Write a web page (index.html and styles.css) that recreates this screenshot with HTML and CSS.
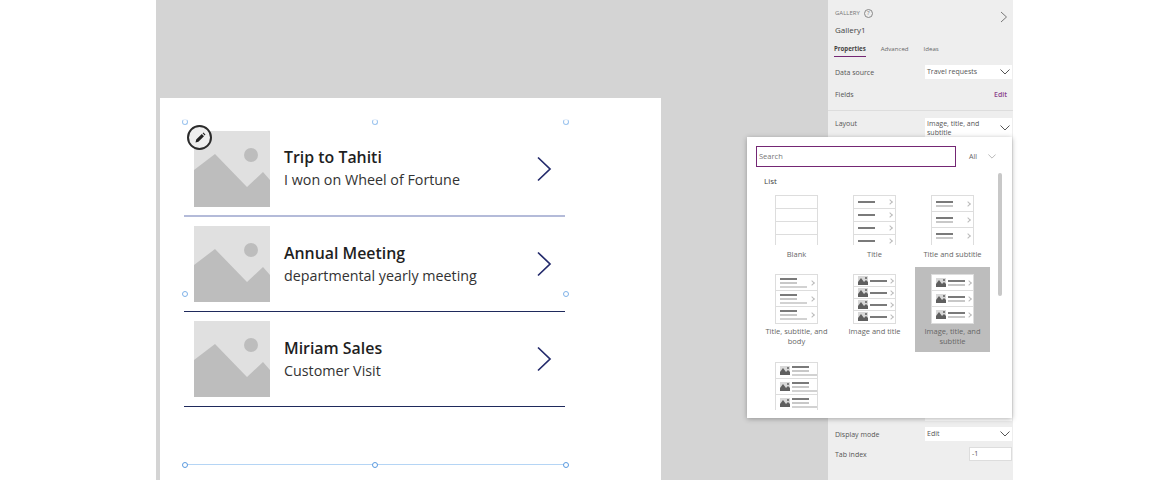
FILE: index.html
```html
<!DOCTYPE html>
<html lang="en">
<head>
  <meta charset="UTF-8" />
  <title>Gallery layout</title>
  <link rel="stylesheet" href="styles.css">
</head>
<body>
  <svg class="defs" width="0" height="0">
    <symbol id="placeholder" viewBox="0 0 76 76">
      <rect width="76" height="76" fill="#e0e0e0"/>
      <circle cx="57" cy="24" r="7" fill="#bdbdbd"/>
      <path d="M0 39 L21 23 L53 56 L69 41 L76 49 V76 H0 Z" fill="#bdbdbd"/>
    </symbol>
    <symbol id="chevron" viewBox="0 0 16 26">
      <path d="M2 1.5 L14 13 L2 24.5" fill="none" stroke="#232a6b" stroke-width="1.7"/>
    </symbol>
    <symbol id="mini-image" viewBox="0 0 10 9">
      <rect width="10" height="9" fill="#d8d8d8"/>
      <path d="M0 6 L3 2 L6 6 L8 4 L10 6 V9 H0 Z" fill="#5f5f5f"/>
      <circle cx="8" cy="2" r="1" fill="#5f5f5f"/>
    </symbol>
    <symbol id="caret" viewBox="0 0 10 6">
      <path d="M0.5 0.5 L5 5 L9.5 0.5" fill="none" stroke="#555" stroke-width="1"/>
    </symbol>
  </svg>

  <div class="page">
    <main class="canvas">
      <section class="screen">
        <div class="gallery">
          <div class="row">
            <svg class="photo"><use href="#placeholder"/></svg>
            <div class="row-text">
              <div class="row-title">Trip to Tahiti</div>
              <div class="row-sub">I won on Wheel of Fortune</div>
            </div>
            <svg class="row-arrow"><use href="#chevron"/></svg>
          </div>
          <div class="row">
            <svg class="photo"><use href="#placeholder"/></svg>
            <div class="row-text">
              <div class="row-title">Annual Meeting</div>
              <div class="row-sub">departmental yearly meeting</div>
            </div>
            <svg class="row-arrow"><use href="#chevron"/></svg>
          </div>
          <div class="row">
            <svg class="photo"><use href="#placeholder"/></svg>
            <div class="row-text">
              <div class="row-title">Miriam Sales</div>
              <div class="row-sub">Customer Visit</div>
            </div>
            <svg class="row-arrow"><use href="#chevron"/></svg>
          </div>
        </div>

        <!-- selection frame -->
        <span class="bottom-line"></span>
        <span class="handle handle-faint h-tl"></span>
        <span class="handle handle-faint h-tc"></span>
        <span class="handle handle-faint h-tr"></span>
        <span class="handle handle-mid h-ml"></span>
        <span class="handle handle-mid h-mr"></span>
        <span class="handle h-bl"></span>
        <span class="handle h-bc"></span>
        <span class="handle h-br"></span>
        <span class="edit-badge">
          <svg width="14" height="14" viewBox="0 0 14 14"><path d="M2.5 11.5 L3.2 8.6 L8.8 3 L11 5.2 L5.4 10.8 Z M9.6 2.2 L10.4 1.6 L12.4 3.6 L11.8 4.4 Z" fill="#222"/></svg>
        </span>
      </section>
    </main>

    <aside class="panel">
      <div class="panel-head">
        <div class="kicker">GALLERY <span class="help">?</span></div>
        <div class="ctrl-name">Gallery1</div>
        <svg class="panel-close" width="8" height="12" viewBox="0 0 8 12"><path d="M1 1 L6.5 6 L1 11" fill="none" stroke="#777" stroke-width="1"/></svg>
      </div>
      <div class="tabs">
        <span class="tab tab-on">Properties</span>
        <span class="tab">Advanced</span>
        <span class="tab">Ideas</span>
      </div>
      <div class="prop prop-source">
        <span>Data source</span>
        <div class="picker">Travel requests<svg class="caret"><use href="#caret"/></svg></div>
      </div>
      <div class="prop prop-fields">
        <span>Fields</span>
        <span class="edit-link">Edit</span>
      </div>
      <div class="prop prop-layout">
        <span>Layout</span>
        <div class="picker picker-tall"><span>Image, title, and subtitle</span><svg class="caret"><use href="#caret"/></svg></div>
      </div>
      <div class="panel-lower">
        <div class="prop prop-lower">
          <span>Transition</span>
          <div class="picker">None</div>
        </div>
        <div class="prop prop-lower">
          <span>Display mode</span>
          <div class="picker">Edit<svg class="caret"><use href="#caret"/></svg></div>
        </div>
        <div class="prop">
          <span>Tab index</span>
          <div class="tab-index">-1</div>
        </div>
      </div>
    </aside>
  </div>

  <!-- layout flyout -->
  <div class="flyout">
    <div class="fly-top">
      <div class="search">Search</div>
      <div class="filter">All<svg class="caret caret-light"><use href="#caret"/></svg></div>
    </div>
    <div class="fly-heading">List</div>
    <div class="scrollbar"></div>
    <div class="tiles" id="tiles"></div>
  </div>

  <script src="tiles.js"></script>
</body>
</html>
```

FILE: tiles.js
```js
// each tile: label, row count, and what goes inside a row
const TILES = [
  { label: "Blank", rows: 4, kind: "blank" },
  { label: "Title", rows: 4, kind: "title" },
  { label: "Title and subtitle", rows: 3, kind: "sub" },
  { label: "Title, subtitle, and body", rows: 3, kind: "body" },
  { label: "Image and title", rows: 4, kind: "img-title" },
  { label: "Image, title, and subtitle", rows: 3, kind: "img-sub", selected: true },
  { label: "", rows: 3, kind: "img-body" }
];

function rowHtml(kind) {
  if (kind === "blank") return '<div class="mini-row"></div>';
  const hasImg = kind.indexOf("img") === 0;
  const img = hasImg ? '<svg class="mini-img"><use href="#mini-image"/></svg>' : "";
  let bars = '<i class="bar bar-dark"></i>';
  if (kind === "sub" || kind === "img-sub" || kind === "body" || kind === "img-body") bars += '<i class="bar bar-mid"></i>';
  if (kind === "body" || kind === "img-body") bars += '<i class="bar bar-wide"></i>';
  return `<div class="mini-row">${img}<div class="bars">${bars}</div><b class="mini-arrow"></b></div>`;
}

document.getElementById("tiles").innerHTML = TILES.map(function (t) {
  let rows = "";
  for (let i = 0; i < t.rows; i++) rows += rowHtml(t.kind);
  return `<div class="tile ${t.selected ? "tile-on" : ""}">
    <div class="thumb thumb-${t.rows}">${rows}</div>
    <div class="tile-label">${t.label}</div>
  </div>`;
}).join("");
```

FILE: styles.css
```css
* {
  margin: 0;
  padding: 0;
  box-sizing: border-box;
}
html, body {
  height: 480px;
  overflow: hidden;
}
body {
  background: white;
  font-family: "Open Sans", sans-serif;
  color: #333;
  position: relative;
}
.defs {
  position: absolute;
}
.page {
  display: flex;
  height: 480px;
  margin-left: 156px;
  width: 857px;
}
.canvas {
  width: 672px;
  background: #d4d4d4;
  padding: 98px 0 0 4px;
}
.screen {
  width: 501px;
  height: 382px;
  background: white;
  position: relative;
  padding: 24px 96px 0 24px;
}
.gallery {
  display: flex;
  flex-direction: column;
}
.row {
  height: 95px;
  display: flex;
  align-items: center;
  border-bottom: 1px solid #1f2a5c;
  padding-left: 10px;
}
.row:first-child {
  border-bottom: 2px solid #b4bbd9;
}
.photo {
  width: 76px;
  height: 76px;
  flex: none;
}
.row-text {
  margin-left: 14px;
  flex: 1;
  padding-bottom: 2px;
}
.row-title {
  font-size: 15.9px;
  font-weight: 600;
  line-height: 24px;
  color: #1f1f1f;
}
.row-sub {
  font-size: 14.3px;
  line-height: 21px;
  color: #333;
}
.row-arrow {
  width: 16px;
  height: 26px;
  margin-right: 13px;
}
.bottom-line {
  position: absolute;
  left: 24px;
  top: 366px;
  width: 381px;
  border-top: 1px solid #b5d5f5;
}
.handle {
  position: absolute;
  width: 6px;
  height: 6px;
  margin: 0.5px;
  border: 1px solid #5b9be0;
  border-radius: 50%;
  background: white;
}
.handle-mid {
  border-color: #7fb2e8;
}
.handle-faint {
  border-color: #9cc4ee;
  border-top-color: #e4eefa;
}
.h-tl { left: 21px; top: 20px; }
.h-tc { left: 211px; top: 20px; }
.h-tr { left: 402px; top: 20px; }
.h-ml { left: 21px; top: 192px; }
.h-mr { left: 402px; top: 192px; }
.h-bl { left: 21px; top: 363px; }
.h-bc { left: 211px; top: 363px; }
.h-br { left: 402px; top: 363px; }
.edit-badge {
  position: absolute;
  left: 27px;
  top: 27px;
  width: 25px;
  height: 25px;
  border: 2px solid #2b2b2b;
  border-radius: 50%;
  background: #eeeeee;
  display: flex;
  align-items: center;
  justify-content: center;
}
.panel {
  width: 185px;
  background: #eeeeee;
  padding: 0 1px 0 7px;
  font-size: 7px;
  color: #555;
  position: relative;
}
.panel-head {
  padding-top: 8px;
  height: 43px;
}
.kicker {
  font-size: 6px;
  line-height: 11px;
  color: #777;
  display: flex;
  align-items: center;
  gap: 4px;
}
.help {
  width: 9px;
  height: 9px;
  border: 1px solid #888;
  border-radius: 50%;
  font-size: 6px;
  line-height: 7px;
  text-align: center;
}
.ctrl-name {
  font-size: 8px;
  line-height: 12px;
  margin-top: 5px;
  color: #444;
}
.panel-close {
  position: absolute;
  right: 5px;
  top: 11px;
}
.tabs {
  display: flex;
  gap: 15px;
  height: 16px;
  margin-left: -1px;
}
.tab {
  font-size: 6.1px;
  line-height: 12px;
  color: #666;
}
.tab-on {
  font-weight: 700;
  color: #444;
  height: 14px;
  border-bottom: 1px solid #742774;
}
.prop {
  display: flex;
  justify-content: space-between;
  align-items: center;
  font-size: 7px;
  color: #555;
}
.prop-source {
  height: 18px;
  margin-top: 4px;
}
.prop-fields {
  height: 27px;
  padding-right: 5px;
}
.edit-link {
  color: #8a3f8a;
  font-weight: 600;
}
.prop-layout {
  height: 26px;
  margin-top: 2px;
  border-top: 1px solid #ddd;
  margin-left: -7px;
  padding-left: 7px;
  margin-right: -1px;
  padding-right: 1px;
}
.picker {
  width: 87px;
  height: 14px;
  background: white;
  padding: 0 2px;
  font-size: 7px;
  line-height: 14px;
  display: flex;
  justify-content: space-between;
  align-items: center;
  color: #555;
}
.picker-tall {
  height: 20px;
  line-height: 9px;
  margin-top: 8px;
}
.picker-tall span {
  width: 62px;
}
.caret {
  width: 10px;
  height: 6px;
  flex: none;
}
.caret-light {
  width: 8px;
  height: 5px;
  opacity: 0.5;
}
.panel-lower {
  position: absolute;
  left: 7px;
  right: 1px;
  top: 407px;
}
.prop-lower {
  height: 14px;
  margin-bottom: 6px;
}
.tab-index {
  width: 43px;
  height: 14px;
  background: white;
  border: 1px solid #ddd;
  font-size: 7px;
  line-height: 12px;
  padding-left: 2px;
}

/* layout flyout */
.flyout {
  position: absolute;
  left: 747px;
  top: 137px;
  width: 265px;
  height: 281px;
  background: white;
  box-shadow: 0 1px 5px rgba(0, 0, 0, 0.3);
  padding: 9px 9px 0 9px;
}
.fly-top {
  display: flex;
  align-items: center;
}
.search {
  width: 200px;
  height: 21px;
  border: 1px solid #742774;
  font-size: 7.5px;
  line-height: 19px;
  padding-left: 2px;
  color: #777;
}
.filter {
  margin-left: 13px;
  font-size: 7px;
  color: #666;
  display: flex;
  gap: 11px;
  align-items: center;
}
.fly-heading {
  font-size: 8px;
  line-height: 12px;
  margin: 8px 0 0 8px;
  color: #444;
}
.scrollbar {
  position: absolute;
  left: 251px;
  top: 36px;
  width: 4px;
  height: 123px;
  background: #c8c8c8;
  border-radius: 2px;
}
.tiles {
  display: grid;
  grid-template-columns: repeat(3, 75px);
  column-gap: 3px;
  margin-left: 3px;
  margin-top: 6px;
}
.tile {
  height: 85px;
  padding-top: 7px;
  display: flex;
  flex-direction: column;
  align-items: center;
}
.tile:nth-child(-n+3) {
  height: 74px;
  padding-top: 2px;
}
.tile-on {
  background: #bdbdbd;
}
.tile:nth-child(n+7) {
  height: 58px;
  padding-top: 10px;
}
.thumb {
  flex: none;
  width: 43px;
  height: 50px;
  background: white;
  border-left: 1px solid #ddd;
  border-right: 1px solid #ddd;
  overflow: hidden;
  display: flex;
  flex-direction: column;
}
.tile:nth-child(n+4) .thumb {
  border-bottom: 1px solid #ddd;
}
.tile:nth-child(n+7) .thumb {
  border-bottom: 0;
  height: 48px;
}
.mini-row {
  flex: none;
  height: 13px;
  border-top: 1px solid #ddd;
  display: flex;
  align-items: center;
  padding: 0 3px 0 4px;
  gap: 2px;
}
.tile:nth-child(5) .mini-row {
  height: 12px;
}
.thumb-3 .mini-row {
  height: 16px;
}
.mini-img {
  width: 10px;
  height: 9px;
  flex: none;
}
.bars {
  flex: 1;
  display: flex;
  flex-direction: column;
  gap: 2px;
}
.bar {
  display: block;
  height: 2px;
  width: 17px;
}
.bar-dark { background: #7a7a7a; }
.bar-mid { background: #c8c8c8; }
.bar-wide { background: #d2d2d2; width: 27px; }
.mini-arrow {
  width: 4px;
  height: 4px;
  border-top: 1px solid #bbb;
  border-right: 1px solid #bbb;
  transform: rotate(45deg);
  flex: none;
}
.tile-label {
  font-size: 7.5px;
  line-height: 10px;
  text-align: center;
  color: #666;
  margin-top: 4px;
  width: 72px;
}
.tile:nth-child(n+4) .tile-label {
  margin-top: 2px;
}
```
